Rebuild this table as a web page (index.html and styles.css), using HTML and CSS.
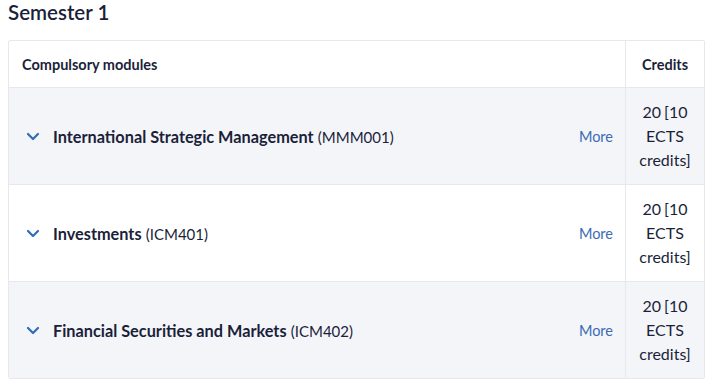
FILE: index.html
```html
<!DOCTYPE html>
<html>
<head>
<meta charset="utf-8">
<link rel="stylesheet" href="styles.css">
</head>
<body>
<h2 class="title">Semester 1</h2>
<div class="table">
  <div class="head head-name">Compulsory modules</div>
  <div class="head head-credits">Credits</div>

  <div class="cell name shade">
    <svg class="chev" width="14" height="9" viewBox="0 0 14 9"><path d="M2 2 L7 7 L12 2" fill="none" stroke="#2f6db5" stroke-width="2.2" stroke-linecap="round" stroke-linejoin="round"/></svg>
    <span class="mod"><b>International Strategic Management</b> <span class="code">(MMM001)</span></span>
    <span class="more">More</span>
  </div>
  <div class="cell credits shade">20 [10 ECTS credits]</div>

  <div class="cell name">
    <svg class="chev" width="14" height="9" viewBox="0 0 14 9"><path d="M2 2 L7 7 L12 2" fill="none" stroke="#2f6db5" stroke-width="2.2" stroke-linecap="round" stroke-linejoin="round"/></svg>
    <span class="mod"><b>Investments</b> <span class="code">(ICM401)</span></span>
    <span class="more">More</span>
  </div>
  <div class="cell credits">20 [10 ECTS credits]</div>

  <div class="cell name shade">
    <svg class="chev" width="14" height="9" viewBox="0 0 14 9"><path d="M2 2 L7 7 L12 2" fill="none" stroke="#2f6db5" stroke-width="2.2" stroke-linecap="round" stroke-linejoin="round"/></svg>
    <span class="mod"><b>Financial Securities and Markets</b> <span class="code">(ICM402)</span></span>
    <span class="more">More</span>
  </div>
  <div class="cell credits shade">20 [10 ECTS credits]</div>
</div>
</body>
</html>
```
FILE: styles.css
```css
body {
  margin: 0;
  padding: 0 6px 0 8px;
  font-family: Lato, "Open Sans", sans-serif;
  color: #1b1f3a;
  background: #fff;
}
.title {
  margin: 0;
  padding-top: 1px;
  height: 39px;
  font-size: 20.5px;
  font-weight: 600;
  line-height: 22px;
  color: #1b1f3a;
}
.table {
  display: grid;
  grid-template-columns: 1fr 78px;
  border: 1px solid #e6e8ee;
  border-radius: 2px;
}
.head {
  height: 46px;
  display: flex;
  align-items: center;
  font-size: 14.5px;
  font-weight: 700;
  border-bottom: 1px solid #e6e8ee;
}
.head-name {
  padding-left: 13px;
  border-right: 1px solid #e6e8ee;
}
.head-credits {
  justify-content: center;
}
.cell {
  height: 96px;
  border-bottom: 1px solid #e6e8ee;
  display: flex;
  align-items: center;
}
.cell:nth-last-child(-n+2) {
  border-bottom: none;
}
.shade {
  background: #f4f5f9;
}
.name {
  padding-left: 17px;
  padding-right: 12px;
  border-right: 1px solid #e6e8ee;
}
.chev {
  flex: none;
  margin-right: 13px;
}
.mod {
  flex: 1;
  font-size: 16.3px;
}
.mod b {
  font-weight: 700;
}
.code {
  font-size: 15px;
}
.more {
  font-size: 14.5px;
  color: #3b6cb3;
}
.credits {
  justify-content: center;
  text-align: center;
  font-size: 16px;
  line-height: 24px;
  padding: 0 6px;
  word-spacing: -1px;
}
```
